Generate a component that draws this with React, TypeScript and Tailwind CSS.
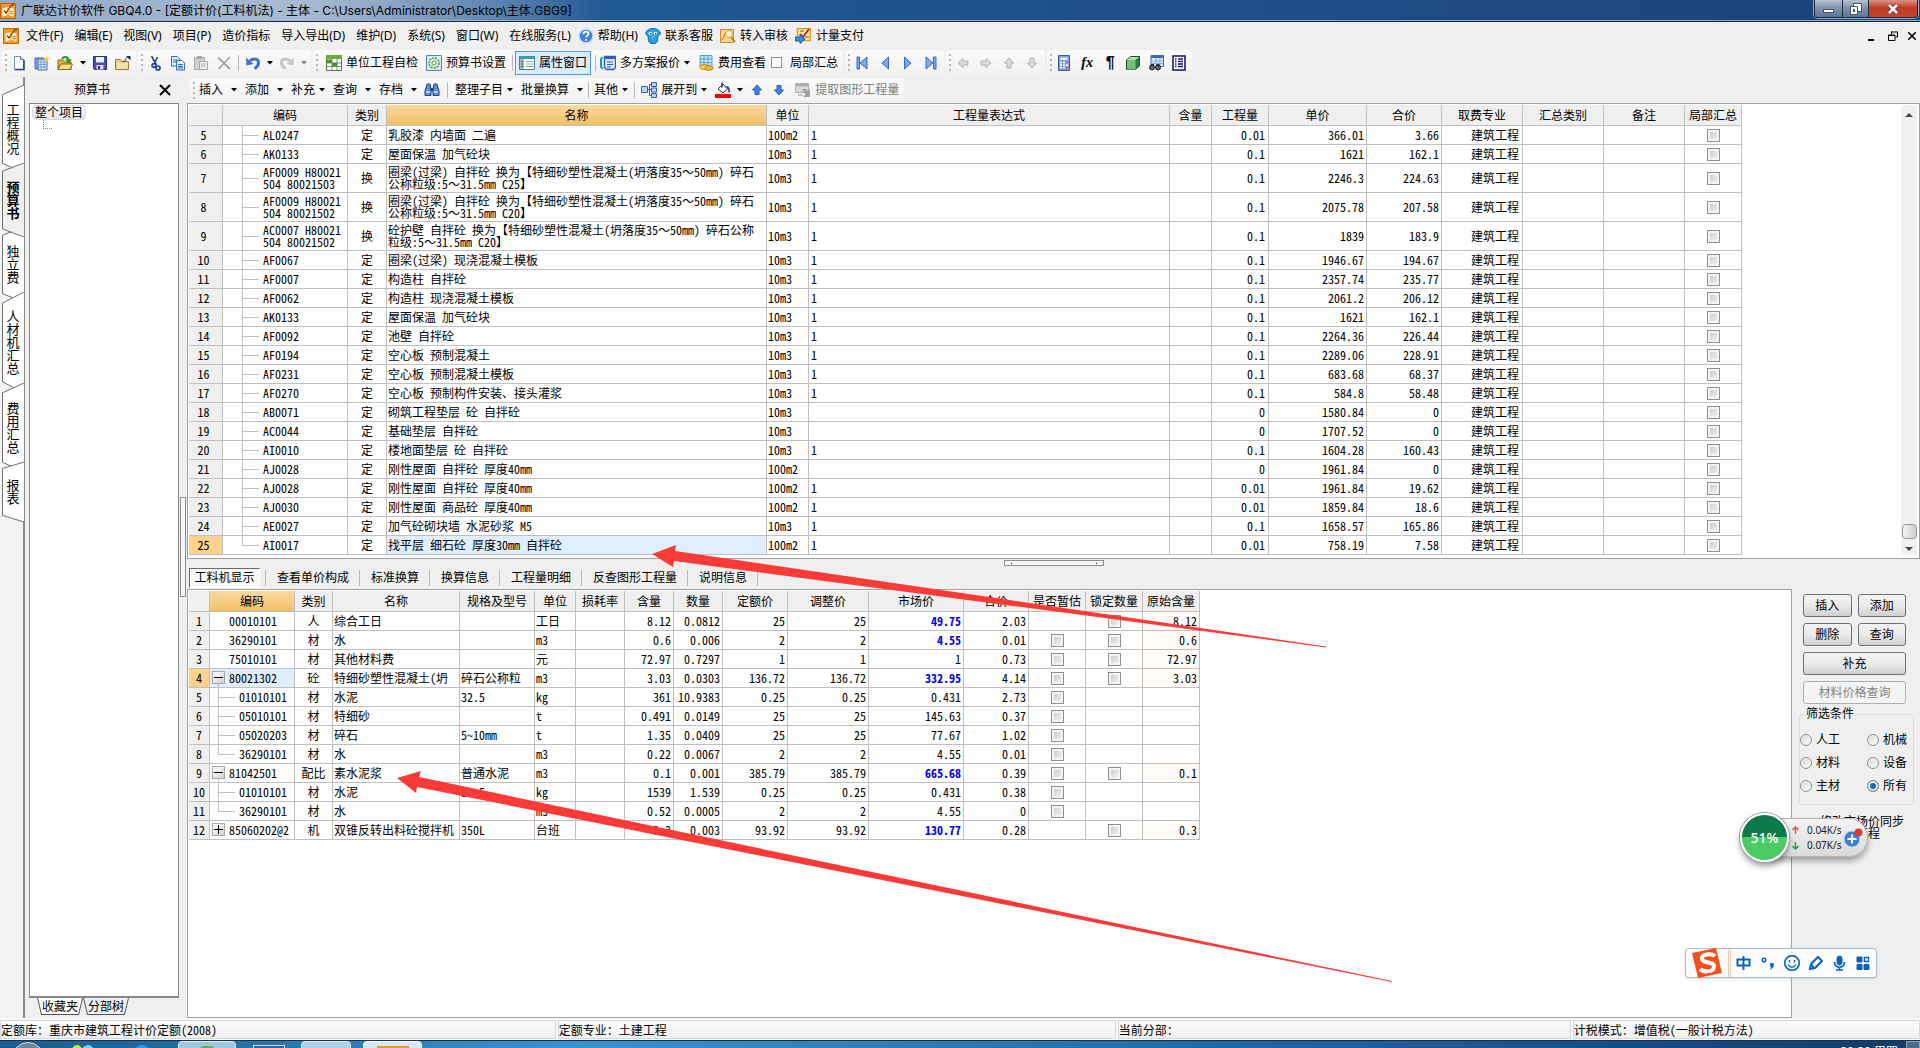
import { Fragment, ReactNode } from "react";

const uiFont = "font-['Noto_Sans','Noto_Sans_CJK_SC',sans-serif]";
const gridFont = "font-['Noto_Sans_Mono_CJK_SC','Liberation_Sans','Noto_Sans_CJK_SC',sans-serif]";

const quotaCols = [
  { label: "", w: "w-[34px]" },
  { label: "编码", w: "w-[125px]" },
  { label: "类别", w: "w-[39px]" },
  { label: "名称", w: "w-[380px]" },
  { label: "单位", w: "w-[42px]" },
  { label: "工程量表达式", w: "w-[361px]" },
  { label: "含量", w: "w-[42px]" },
  { label: "工程量", w: "w-[57px]" },
  { label: "单价", w: "w-[98px]" },
  { label: "合价", w: "w-[75px]" },
  { label: "取费专业", w: "w-[81px]" },
  { label: "汇总类别", w: "w-[81px]" },
  { label: "备注", w: "w-[81px]" },
  { label: "局部汇总", w: "w-[57px]" },
];

// no, code, type, name, unit, expression, quantity, price, total
const quotas = [
  ["5", "AL0247", "定", "乳胶漆 内墙面 二遍", "100m2", "1", "0.01", "366.01", "3.66"],
  ["6", "AK0133", "定", "屋面保温 加气砼块", "10m3", "1", "0.1", "1621", "162.1"],
  ["7", "AF0009 H80021\n504 80021503", "换", "圈梁(过梁) 自拌砼 换为【特细砂塑性混凝土(坍落度35～50mm) 碎石\n公称粒级:5～31.5mm C25】", "10m3", "1", "0.1", "2246.3", "224.63"],
  ["8", "AF0009 H80021\n504 80021502", "换", "圈梁(过梁) 自拌砼 换为【特细砂塑性混凝土(坍落度35～50mm) 碎石\n公称粒级:5～31.5mm C20】", "10m3", "1", "0.1", "2075.78", "207.58"],
  ["9", "AC0007 H80021\n504 80021502", "换", "砼护壁 自拌砼 换为【特细砂塑性混凝土(坍落度35～50mm) 碎石公称\n粒级:5～31.5mm C20】", "10m3", "1", "0.1", "1839", "183.9"],
  ["10", "AF0067", "定", "圈梁(过梁) 现浇混凝土模板", "10m3", "1", "0.1", "1946.67", "194.67"],
  ["11", "AF0007", "定", "构造柱 自拌砼", "10m3", "1", "0.1", "2357.74", "235.77"],
  ["12", "AF0062", "定", "构造柱 现浇混凝土模板", "10m3", "1", "0.1", "2061.2", "206.12"],
  ["13", "AK0133", "定", "屋面保温 加气砼块", "10m3", "1", "0.1", "1621", "162.1"],
  ["14", "AF0092", "定", "池壁 自拌砼", "10m3", "1", "0.1", "2264.36", "226.44"],
  ["15", "AF0194", "定", "空心板 预制混凝土", "10m3", "1", "0.1", "2289.06", "228.91"],
  ["16", "AF0231", "定", "空心板 预制混凝土模板", "10m3", "1", "0.1", "683.68", "68.37"],
  ["17", "AF0270", "定", "空心板 预制构件安装、接头灌浆", "10m3", "1", "0.1", "584.8", "58.48"],
  ["18", "AB0071", "定", "砌筑工程垫层 砼 自拌砼", "10m3", "", "0", "1580.84", "0"],
  ["19", "AC0044", "定", "基础垫层 自拌砼", "10m3", "", "0", "1707.52", "0"],
  ["20", "AI0010", "定", "楼地面垫层 砼 自拌砼", "10m3", "1", "0.1", "1604.28", "160.43"],
  ["21", "AJ0028", "定", "刚性屋面 自拌砼 厚度40mm", "100m2", "", "0", "1961.84", "0"],
  ["22", "AJ0028", "定", "刚性屋面 自拌砼 厚度40mm", "100m2", "1", "0.01", "1961.84", "19.62"],
  ["23", "AJ0030", "定", "刚性屋面 商品砼 厚度40mm", "100m2", "1", "0.01", "1859.84", "18.6"],
  ["24", "AE0027", "定", "加气砼砌块墙 水泥砂浆 M5", "10m3", "1", "0.1", "1658.57", "165.86"],
  ["25", "AI0017", "定", "找平层 细石砼 厚度30mm 自拌砼", "100m2", "1", "0.01", "758.19", "7.58"],
];

const resourceCols = [
  { label: "", w: "w-[21px]" },
  { label: "编码", w: "w-[85px]" },
  { label: "类别", w: "w-[38px]" },
  { label: "名称", w: "w-[127px]" },
  { label: "规格及型号", w: "w-[75px]" },
  { label: "单位", w: "w-[41px]" },
  { label: "损耗率", w: "w-[49px]" },
  { label: "含量", w: "w-[49px]" },
  { label: "数量", w: "w-[49px]" },
  { label: "定额价", w: "w-[65px]" },
  { label: "调整价", w: "w-[81px]" },
  { label: "市场价", w: "w-[95px]" },
  { label: "合价", w: "w-[65px]" },
  { label: "是否暂估", w: "w-[57px]" },
  { label: "锁定数量", w: "w-[57px]" },
  { label: "原始含量", w: "w-[57px]" },
];

type Node = "root" | "open" | "closed" | "child" | "last";

interface Resource {
  code: string;
  node: Node;
  kind: string;
  name: string;
  spec?: string;
  unit: string;
  nums: string[];
  changed?: boolean;
  estimate?: boolean;
  lock?: boolean;
  origin?: string;
}

const resources: Resource[] = [
  { code: "00010101", node: "root", kind: "人", name: "综合工日", unit: "工日", nums: ["8.12", "0.0812", "25", "25", "49.75", "2.03"], changed: true, lock: true, origin: "8.12" },
  { code: "36290101", node: "root", kind: "材", name: "水", unit: "m3", nums: ["0.6", "0.006", "2", "2", "4.55", "0.01"], changed: true, estimate: true, lock: true, origin: "0.6" },
  { code: "75010101", node: "root", kind: "材", name: "其他材料费", unit: "元", nums: ["72.97", "0.7297", "1", "1", "1", "0.73"], estimate: true, lock: true, origin: "72.97" },
  { code: "80021302", node: "open", kind: "砼", name: "特细砂塑性混凝土(坍", spec: "碎石公称粒", unit: "m3", nums: ["3.03", "0.0303", "136.72", "136.72", "332.95", "4.14"], changed: true, estimate: true, lock: true, origin: "3.03" },
  { code: "01010101", node: "child", kind: "材", name: "水泥", spec: "32.5", unit: "kg", nums: ["361", "10.9383", "0.25", "0.25", "0.431", "2.73"], estimate: true },
  { code: "05010101", node: "child", kind: "材", name: "特细砂", unit: "t", nums: ["0.491", "0.0149", "25", "25", "145.63", "0.37"], estimate: true },
  { code: "05020203", node: "child", kind: "材", name: "碎石", spec: "5~10mm", unit: "t", nums: ["1.35", "0.0409", "25", "25", "77.67", "1.02"], estimate: true },
  { code: "36290101", node: "last", kind: "材", name: "水", unit: "m3", nums: ["0.22", "0.0067", "2", "2", "4.55", "0.01"], estimate: true },
  { code: "81042501", node: "open", kind: "配比", name: "素水泥浆", spec: "普通水泥", unit: "m3", nums: ["0.1", "0.001", "385.79", "385.79", "665.68", "0.39"], changed: true, estimate: true, lock: true, origin: "0.1" },
  { code: "01010101", node: "child", kind: "材", name: "水泥", spec: "32.5", unit: "kg", nums: ["1539", "1.539", "0.25", "0.25", "0.431", "0.38"], estimate: true },
  { code: "36290101", node: "last", kind: "材", name: "水", unit: "m3", nums: ["0.52", "0.0005", "2", "2", "4.55", "0"], estimate: true },
  { code: "85060202@2", node: "closed", kind: "机", name: "双锥反转出料砼搅拌机", spec: "350L", unit: "台班", nums: ["0.3", "0.003", "93.92", "93.92", "130.77", "0.28"], changed: true, lock: true, origin: "0.3" },
];

const menus = ["文件(F)", "编辑(E)", "视图(V)", "项目(P)", "造价指标", "导入导出(D)", "维护(D)", "系统(S)", "窗口(W)", "在线服务(L)"];

const sideTabs = [
  { label: "工程概况", h: "h-[88px]" },
  { label: "预算书", h: "h-[74px]" },
  { label: "独立费", h: "h-[75px]" },
  { label: "人材机汇总", h: "h-[101px]" },
  { label: "费用汇总", h: "h-[89px]" },
  { label: "报表", h: "h-[60px]" },
];

const detailTabs = ["查看单价构成", "标准换算", "换算信息", "工程量明细", "反查图形工程量", "说明信息"];

function Icon({ children, className = "" }: { children: ReactNode; className?: string }) {
  return (
    <svg viewBox="0 0 16 16" className={`w-4 h-4 shrink-0 ${className}`} fill="none" aria-hidden="true">
      {children}
    </svg>
  );
}

const AppLogo = () => (
  <Icon>
    <rect x="0.5" y="0.5" width="15" height="15" fill="#f09a1c" stroke="#b9690c" />
    <path d="M2.500 5.500l5-1.500v8l-5 1.500z" fill="#fff6df" />
    <path d="M8.500 4l5 1.500v8l-5-1.500z" fill="#fdebc0" />
    <path d="M4 7.500l2 2.500L11.500 2l2.500-.5" stroke="#7a3d05" strokeWidth="1.300" />
    <path d="M9.500 8l3 .8M9.500 10.200l3 .8" stroke="#b86f1a" />
  </Icon>
);

const NewIcon = () => (
  <Icon>
    <path d="M3.500 1.500h6l3 3v10h-9z" fill="#fff" stroke="#7d8fb0" />
    <path d="M9.500 1.500v3h3" fill="#dfe8f7" stroke="#5b6f93" />
    <path d="M13 5v9.500H4" stroke="#1f3f78" strokeWidth="1.500" />
  </Icon>
);

const SheetIcon = () => (
  <Icon>
    <path d="M1 3h9v11H1z" fill="#7fa6dd" stroke="#4a6ea8" />
    <path d="M4 4h9v11H4z" fill="#dbe9fb" stroke="#4a6ea8" />
    <path d="M4 7h9M4 9.500h9M4 12h9M7 4v11M10 4v11" stroke="#7f9fcf" />
    <path d="M12.500 0l1 2.500L16 3.500l-2.500 1-1 2.500-1-2.500L9 3.500l2.500-1z" fill="#ffd34a" />
  </Icon>
);

const OpenIcon = () => (
  <Icon>
    <path d="M1 5h5l1.500 2H14v7.500H1z" fill="#e8b23a" stroke="#8a6210" />
    <path d="M1 14.500L4 9h11.500L13 14.500z" fill="#ffe08a" stroke="#8a6210" />
    <path d="M5 4c2-3 6-2.500 6.500 1" stroke="#2d9a24" strokeWidth="2" />
    <path d="M8 4.500h7L11.500 9z" fill="#2d9a24" />
  </Icon>
);

const SaveIcon = () => (
  <Icon>
    <path d="M1.500 1.500h13v13h-12l-1-1z" fill="#4a4fb4" stroke="#26297d" />
    <path d="M4 2h8v5.500H4z" fill="#f3f4fb" />
    <path d="M4.500 10h7v4.500h-7z" fill="#d9dbe6" />
    <path d="M6 11h2v3H6z" fill="#26297d" />
  </Icon>
);

const FolderIcon = () => (
  <Icon>
    <path d="M.5 4.500h5l1.500 2h6.500v8H.5z" fill="#f2cf85" stroke="#a07a30" />
    <path d="M2 8h10.500v6H2z" fill="#f8e1ac" />
    <path d="M11 3.500c0 2-1 3-3 3M11 3.500l2-2" stroke="#27304f" />
    <path d="M11 1h4.500v4.500z" fill="#27304f" />
  </Icon>
);

const CutIcon = () => (
  <Icon>
    <path d="M4.500 1l5 9M10.500 2l-3 6" stroke="#39465f" strokeWidth="1.600" />
    <circle cx="11" cy="13" r="2" stroke="#1d3fae" strokeWidth="1.700" />
    <circle cx="7" cy="10.500" r="1.900" stroke="#1d3fae" strokeWidth="1.700" />
  </Icon>
);

const CopyIcon = () => (
  <Icon>
    <path d="M1.500 1.500h6l2.500 2.500v7h-8.500z" fill="#e6f0ff" stroke="#2f66bd" />
    <path d="M3 5h5M3 7h3" stroke="#2f66bd" />
    <path d="M6.500 5.500h5.500l2.500 2.500v7h-8z" fill="#e6f0ff" stroke="#2f66bd" />
    <path d="M8 9.500h5M8 11.500h5M8 13h5" stroke="#2f66bd" />
  </Icon>
);

const PasteIcon = () => (
  <Icon>
    <path d="M1.500 2.500h10v12h-10z" fill="#cfcfcf" stroke="#a9a9a9" />
    <path d="M4 1h5v3H4z" fill="#a9a9a9" />
    <path d="M6.500 6.500h8v8h-8z" fill="#ececec" stroke="#a9a9a9" />
    <path d="M8 9h5M8 11h5" stroke="#b9b9b9" />
  </Icon>
);

const DeleteIcon = () => (
  <Icon>
    <path d="M2 2.500l12 11.500M14 2L2.500 14" stroke="#a3a3a3" strokeWidth="1.800" />
  </Icon>
);

const UndoIcon = ({ color }: { color: string }) => (
  <Icon>
    <path d="M5 6c3-3 8.500-2.500 8.500 1.500 0 3-2 5-4 6" stroke={color} strokeWidth="3" />
    <path d="M1 2.500l.5 8 7-1.500z" fill={color} />
  </Icon>
);

const CheckTableIcon = () => (
  <Icon>
    <path d="M.5.500h15v15H.5z" fill="#fff" stroke="#4f7f2e" />
    <path d="M0 0h16v4H0z" fill="#6cab35" />
    <path d="M1 8h14M1 11.500h14M6 4v11M11 4v11" stroke="#7d8b94" />
    <path d="M1 4.500h5V8H1zM6 8h5v3.500H6z" fill="#4b8f2c" />
  </Icon>
);

const BookSetIcon = () => (
  <Icon>
    <path d="M.5.500h15v15H.5z" fill="#dbe9f4" stroke="#5b83b1" />
    <circle cx="8" cy="8" r="5" fill="#d7f0cf" stroke="#4e9a4a" strokeWidth="1.500" strokeDasharray="2 1" />
    <circle cx="8" cy="8" r="2" fill="#fff" stroke="#4e9a4a" />
  </Icon>
);

const PropsIcon = () => (
  <Icon>
    <path d="M.5 1.500h15v13H.5z" fill="#fff" stroke="#4e7f8f" />
    <path d="M0 1h16v3H0z" fill="#2f9cb8" />
    <path d="M1 4h4v10H1z" fill="#9fbfae" />
    <path d="M2 6.500h2M2 9h2M2 11.500h2" stroke="#2f6f4f" />
    <path d="M7 6.500h7M7 9h7M7 11.500h7" stroke="#7fae8f" />
  </Icon>
);

const PlanIcon = () => (
  <Icon>
    <path d="M2.500 2L1 4v8l2 1.500" stroke="#18a0a8" strokeWidth="2" />
    <path d="M4.500 1.500h11v11l-2 2h-7l-2-2z" fill="#dbe8ff" stroke="#2b5fd0" strokeWidth="1.400" />
    <path d="M5 3h10" stroke="#2b5fd0" strokeWidth="2" />
    <path d="M7 7h6M7 9.500h6M7 12h4" stroke="#2b5fd0" />
  </Icon>
);

const CostIcon = () => (
  <Icon>
    <path d="M2 .5h12v11H2z" fill="#bfe2f5" stroke="#5da2c9" />
    <path d="M2 4h12M2 7.500h12M6 .5v11M10 .5v11" stroke="#5da2c9" />
    <ellipse cx="6" cy="12" rx="4" ry="2.500" fill="#ffd24d" stroke="#b58410" />
    <ellipse cx="11" cy="13" rx="4" ry="2.300" fill="#f3b63a" stroke="#b58410" />
  </Icon>
);

const NavIcon = ({ d }: { d: string }) => (
  <Icon>
    <path d={d} fill="#7fa8ee" stroke="#3567c9" />
  </Icon>
);

const GrayArrow = ({ turn }: { turn: string }) => (
  <Icon className={turn}>
    <path d="M3 8l5-4.500v2.500h5v4H8v2.500z" fill="#dcdcdc" stroke="#b0b0b0" />
  </Icon>
);

const BlueArrow = ({ turn }: { turn: string }) => (
  <Icon className={turn}>
    <path d="M3 8l5-4.500v2.500h4.500v4H8v2.500z" fill="#3c86ea" stroke="#2058b8" />
  </Icon>
);

const CalcIcon = () => (
  <Icon>
    <path d="M2.500.500h11v15h-11z" fill="#7d9edb" stroke="#375896" />
    <path d="M4.500 2.500h7v2.500h-7z" fill="#eef6ff" />
    <path d="M4 7.500h8M4 10h8M4 12.500h8" stroke="#fff" strokeWidth="1.500" strokeDasharray="2 1" />
    <path d="M10 7.500h2M10 12.500h2" stroke="#e04848" strokeWidth="1.500" />
  </Icon>
);

const CubeIcon = () => (
  <Icon>
    <path d="M1.500 5l4-3.500h9v9.500l-4 3.500h-9z" fill="#2f7d3c" stroke="#1b5426" />
    <path d="M2 5h8.500v9.500H2z" fill="#73c07d" />
    <path d="M2 5l3.500-3h8.500l-3.500 3z" fill="#b5e0b5" />
  </Icon>
);

const FindSheetIcon = () => (
  <Icon>
    <path d="M3 .5h12.500v11H3z" fill="#dce9fb" stroke="#3e6cb5" />
    <path d="M3 1h12v2H3z" fill="#3e6cb5" />
    <path d="M4 6h11M4 8.500h11M8 3v8M12 3v8" stroke="#8aa9da" />
    <circle cx="4" cy="12.500" r="2.500" fill="#5d6670" stroke="#23282e" />
    <circle cx="10" cy="12.500" r="2.500" fill="#5d6670" stroke="#23282e" />
    <path d="M3 9h3v2H3zM8.500 9h3v2h-3z" fill="#23282e" />
  </Icon>
);

const ListIcon = () => (
  <Icon>
    <path d="M2 1h12v14H2z" fill="#fff" stroke="#101060" strokeWidth="1.500" />
    <path d="M4 4h1.500M4 6.500h1.500M4 9h1.500M4 11.500h1.500M7 4h5M7 6.500h5M7 9h5M7 11.500h5" stroke="#101080" strokeWidth="1.300" />
  </Icon>
);

const BinocularsIcon = () => (
  <Icon>
    <path d="M3 2h3l1 5v6.500H1V9zM10 2h3l2 7v4.500H9V7z" fill="#5f8fd8" stroke="#1f4288" />
    <path d="M6.500 6h3v3h-3z" fill="#1f4288" />
    <path d="M2 10h4M10 10h4" stroke="#dcebff" strokeWidth="1.500" />
  </Icon>
);

const ExpandIcon = () => (
  <Icon>
    <path d="M.5 4.500h6v6h-6zM10.500.500h5v4h-5zM10.500 6h5v4h-5zM10.500 11.500h5v4h-5z" fill="#b9d4f6" stroke="#2f5fae" />
    <path d="M6.500 7.500h4M8.500 2.500h2M8.500 13.500h2M8.500 2.500v11" stroke="#2f5fae" />
  </Icon>
);

const BucketIcon = () => (
  <Icon>
    <path d="M3 7l5-5 4.500 5L8 11z" fill="#fff" stroke="#20242c" />
    <path d="M7 .5v5M11.500 4.500c3 1 3 3 2.500 6" stroke="#1d3f9e" strokeWidth="1.600" />
    <path d="M0 12h16v4H0z" fill="#ff0000" />
  </Icon>
);

const ExtractIcon = () => (
  <Icon>
    <path d="M.5 1.500h13v9H.5z" fill="#d9d9d9" stroke="#b0b0b0" />
    <path d="M1 2h12v2.500H1z" fill="#b0b0b0" />
    <path d="M7 7h4l2 2 2-2v8H8l2.500-2.500z" fill="#a0a0a0" />
    <path d="M3 12h5v2H3z" fill="#c6c6c6" />
  </Icon>
);

const HelpIcon = () => (
  <Icon>
    <circle cx="8" cy="8" r="7" fill="#3f7fdc" stroke="#cfdcf2" strokeWidth="1.500" />
    <path d="M5.500 6.200c0-3.400 5-3.200 5-.4 0 1.800-2.400 1.800-2.400 3.600M8 11v1.800" stroke="#fff" strokeWidth="1.800" />
  </Icon>
);

const ServiceIcon = () => (
  <Icon>
    <path d="M8 .5c5 0 7 2.500 7.500 5.500L13 8l-.5 5-2 2.500h-5L3.500 13 3 8 .5 6C1 3 3 .5 8 .5z" fill="#23a0e6" stroke="#0f6fb0" />
    <circle cx="5.500" cy="5.500" r="1.800" fill="#fff" />
    <circle cx="10.500" cy="5.500" r="1.800" fill="#fff" />
    <path d="M5 5h1.500v1.500H5zM10 5h1.500v1.500H10z" fill="#222" />
    <path d="M6.500 8.500h3L8 10z" fill="#f2b02c" />
  </Icon>
);

const AuditIcon = () => (
  <Icon>
    <path d="M.5 1.500h13v13H.5z" fill="#fbd58a" stroke="#c98a28" />
    <path d="M2 12l4-8 3 3" stroke="#c9641c" />
    <circle cx="9" cy="6" r="3.500" fill="#fff1cf" stroke="#d3a04c" />
    <path d="M11 9l4 5" stroke="#b8731b" strokeWidth="2" />
  </Icon>
);

const PayIcon = () => (
  <Icon>
    <path d="M2.500.500h13v12h-13z" fill="#ffe6b0" stroke="#d99a2b" strokeWidth="1.500" />
    <path d="M5 6l3 3 6-8" stroke="#c3261c" strokeWidth="2" />
    <path d="M5 3h4M10 9h4" stroke="#7a4a12" />
    <path d="M0 9h5V6.500l5 4.500-5 4.500V13H0z" fill="#2f8fe0" stroke="#1c62a8" />
  </Icon>
);

function Caret({ dim, className = "" }: { dim?: boolean; className?: string }) {
  return (
    <svg viewBox="0 0 6 4" className={`w-[6px] h-1 shrink-0 ${className}`} aria-hidden="true">
      <path d="M0 0h6L3 3.500z" fill={dim ? "#808080" : "#000"} />
    </svg>
  );
}

function Grip() {
  return (
    <span className="mr-[3px] flex w-[3px] shrink-0 flex-col gap-[3px]">
      {[0, 1, 2, 3].map((i) => (
        <i key={i} className="h-[2px] w-[2px] bg-[#b4b4b4]" />
      ))}
    </span>
  );
}

const Sep = ({ className = "" }: { className?: string }) => (
  <i className={`h-4 w-px shrink-0 bg-[#b9b9b9] ${className}`} />
);

function Group({ children, gap = "gap-[7px]" }: { children: ReactNode; gap?: string }) {
  return (
    <div className="flex h-[25px] shrink-0 items-center rounded-sm bg-linear-to-b from-[#fbfbfb] to-[#f1f1f1] pl-[3px] pr-[5px]">
      <Grip />
      <div className={`flex items-center ${gap}`}>{children}</div>
    </div>
  );
}

function IconButton({ label, children, className = "" }: { label: string; children: ReactNode; className?: string }) {
  return (
    <button type="button" aria-label={label} className={`flex h-6 items-center ${className}`}>
      {children}
    </button>
  );
}

function TextButton({ icon, label, active, caret }: { icon: ReactNode; label: string; active?: boolean; caret?: boolean }) {
  return (
    <button
      type="button"
      className={`flex h-6 items-center gap-1 whitespace-nowrap border px-[3px] ${
        active ? "border-[#4a98e8] bg-[#d9ebfc]" : "border-transparent"
      }`}
    >
      {icon}
      {label}
      {caret && <Caret />}
    </button>
  );
}

function DropButton({ label, wide, icon }: { label: string; wide?: boolean; icon?: ReactNode }) {
  return (
    <button type="button" className={`flex items-center whitespace-nowrap ${wide ? "gap-2" : "gap-1"}`}>
      {icon}
      {label}
      <Caret />
    </button>
  );
}

function Tick({ label }: { label: string }) {
  return (
    <input
      type="checkbox"
      aria-label={label}
      className="block mx-auto h-[13px] w-[13px] appearance-none border border-[#8e8f8f] bg-linear-to-br from-[#c3c6cf] to-[#f6f6f6] shadow-[inset_0_0_0_2px_#f4f4f4]"
    />
  );
}

function TitleBar() {
  return (
    <header className="flex h-[22px] shrink-0 items-center justify-between border-b border-[#16294a] bg-linear-to-r from-[#8ea6c4] via-[#1f5894] via-32% to-[#1b4478] shadow-[inset_0_-1px_0_#8fa9c9]">
      <div className="flex h-full items-center gap-[5px] bg-linear-to-r from-[#93aac8] via-[#a9bbd2] to-transparent pr-6">
        <AppLogo />
        <h1 className="whitespace-nowrap font-['Inter','Noto_Sans_CJK_SC',sans-serif] text-[12px] leading-5">
          广联达计价软件 GBQ4.0 - [定额计价(工料机法) - 主体 - C:\Users\Administrator\Desktop\主体.GBG9]
        </h1>
      </div>
      <div className="mr-[2px] flex h-[18px] self-start overflow-hidden rounded-b border border-t-0 border-[#1c2c44] shadow-[0_0_0_1px_#8fa5c0]">
        <button type="button" aria-label="最小化" className="flex w-7 items-end justify-center border-r border-[#1c2c44] bg-linear-to-b from-[#b7c3d2] via-[#8194ad] via-45% to-[#5f7593] pb-1">
          <i className="h-1 w-[11px] border border-[#44546a] bg-white" />
        </button>
        <button type="button" aria-label="还原" className="flex w-[26px] items-center justify-center border-r border-[#1c2c44] bg-linear-to-b from-[#b7c3d2] via-[#8194ad] via-45% to-[#5f7593]">
          <svg viewBox="0 0 12 12" className="h-3 w-3">
            <path d="M3.500.500h8v8h-8z" fill="#fff" stroke="#44546a" />
            <path d="M.5 3.500h7v8h-7z" fill="#fff" stroke="#44546a" />
            <path d="M3 6h2v3H3z" fill="#44546a" />
          </svg>
        </button>
        <button type="button" aria-label="关闭" className="flex w-12 items-center justify-center bg-linear-to-b from-[#dd9384] via-[#bf3a24] via-45% to-[#c4452c]">
          <svg viewBox="0 0 12 12" className="h-3 w-3">
            <path d="M2 2l8 8M10 2l-8 8" stroke="#54343a" strokeWidth="4" />
            <path d="M2 2l8 8M10 2l-8 8" stroke="#fff" strokeWidth="2.500" />
          </svg>
        </button>
      </div>
    </header>
  );
}

function MenuBar() {
  return (
    <nav className="flex h-7 shrink-0 items-center gap-[11px] whitespace-nowrap pl-[3px] pr-1">
      <span className="-mr-1"><AppLogo /></span>
      {menus.map((m) => (
        <button type="button" key={m}>{m}</button>
      ))}
      <button type="button" className="-ml-1 -mr-1 flex items-center gap-1"><HelpIcon />帮助(H)</button>
      <button type="button" className="-mr-1 flex items-center gap-1"><ServiceIcon />联系客服</button>
      <button type="button" className="-mr-1 flex items-center gap-1"><AuditIcon />转入审核</button>
      <button type="button" className="flex items-center gap-[5px]"><PayIcon />计量支付</button>
      <div className="ml-auto flex items-center gap-2">
        <button type="button" aria-label="最小化窗口" className="flex h-3 w-3 items-end"><i className="mb-px h-[2px] w-[6px] bg-black" /></button>
        <button type="button" aria-label="还原窗口">
          <svg viewBox="0 0 10 10" className="h-[10px] w-[10px]" fill="none" stroke="#000">
            <path d="M3 1h6M9.500.500v5.500h-2M3.500.500v3M.5 4h6.500v5.500H.5zM0 4.500h7" />
          </svg>
        </button>
        <button type="button" aria-label="关闭窗口" className="ml-[2px]">
          <svg viewBox="0 0 8 8" className="h-2 w-2" stroke="#000" strokeWidth="1.500">
            <path d="M0 0l8 8M8 0L0 8" />
          </svg>
        </button>
      </div>
    </nav>
  );
}

function MainToolbar() {
  return (
    <div className="flex h-[27px] shrink-0 items-center gap-[2px] pb-[2px] pl-[2px]">
      <Group>
        <IconButton label="新建"><NewIcon /></IconButton>
        <IconButton label="新建预算书"><SheetIcon /></IconButton>
        <IconButton label="打开"><OpenIcon /></IconButton>
        <Caret className="-mr-px" />
        <IconButton label="保存"><SaveIcon /></IconButton>
        <IconButton label="关闭文件"><FolderIcon /></IconButton>
      </Group>
      <Group>
        <IconButton label="剪切"><CutIcon /></IconButton>
        <IconButton label="复制"><CopyIcon /></IconButton>
        <IconButton label="粘贴"><PasteIcon /></IconButton>
        <IconButton label="删除"><DeleteIcon /></IconButton>
        <Sep className="-mx-px" />
        <IconButton label="撤销" className="-mr-px"><UndoIcon color="#3d6fd6" /></IconButton>
        <Caret className="-mr-px" />
        <IconButton label="恢复" className="-mr-px"><span className="-scale-x-100"><UndoIcon color="#c4c4c4" /></span></IconButton>
        <Caret dim className="-mr-px" />
      </Group>
      <Group gap="gap-0">
        <TextButton icon={<CheckTableIcon />} label="单位工程自检" />
        <TextButton icon={<BookSetIcon />} label="预算书设置" />
        <Sep className="mx-[2px]" />
        <TextButton icon={<PropsIcon />} label="属性窗口" active />
        <Sep className="ml-1" />
        <TextButton icon={<PlanIcon />} label="多方案报价" caret />
        <TextButton icon={<CostIcon />} label="费用查看" />
        <label className="ml-px flex items-center gap-2 whitespace-nowrap">
          <input type="checkbox" className="h-[11px] w-[11px] appearance-none border border-[#8e8f8f] bg-white" />
          局部汇总
        </label>
      </Group>
      <Group>
        <IconButton label="首行"><NavIcon d="M3 2h2.500v12H3zM13 2v12L6 8z" /></IconButton>
        <IconButton label="上一行"><NavIcon d="M11.500 2v12L5 8z" /></IconButton>
        <IconButton label="下一行"><NavIcon d="M4.500 2v12L11 8z" /></IconButton>
        <IconButton label="末行"><NavIcon d="M10.500 2H13v12h-2.500zM3 2v12l7-6z" /></IconButton>
      </Group>
      <Group>
        <IconButton label="左移"><GrayArrow turn="" /></IconButton>
        <IconButton label="右移"><GrayArrow turn="rotate-180" /></IconButton>
        <IconButton label="上移"><GrayArrow turn="rotate-90" /></IconButton>
        <IconButton label="下移"><GrayArrow turn="-rotate-90" /></IconButton>
      </Group>
      <Group>
        <IconButton label="计算器"><CalcIcon /></IconButton>
        <button type="button" className="w-4 text-center font-['Liberation_Serif',serif] text-[14px] font-bold italic">fx</button>
        <button type="button" className="w-4 text-center font-['Liberation_Sans',sans-serif] text-[16px] font-bold">¶</button>
        <IconButton label="图集"><CubeIcon /></IconButton>
        <IconButton label="查找表"><FindSheetIcon /></IconButton>
        <IconButton label="列表"><ListIcon /></IconButton>
      </Group>
    </div>
  );
}

function EditToolbar() {
  return (
    <div className="flex h-[26px] shrink-0 items-center pl-[3px]">
      <Group gap="gap-[8px]">
        <DropButton label="插入" wide />
        <DropButton label="添加" wide />
        <DropButton label="补充" />
        <DropButton label="查询" wide />
        <DropButton label="存档" wide />
        <IconButton label="查找" className="-ml-px"><BinocularsIcon /></IconButton>
        <Sep className="-mx-px" />
        <DropButton label="整理子目" />
        <DropButton label="批量换算" wide />
        <Sep className="-mx-[3px]" />
        <DropButton label="其他" />
        <Sep className="-mx-[2px]" />
        <DropButton label="展开到" icon={<ExpandIcon />} />
        <IconButton label="填充颜色"><BucketIcon /></IconButton>
        <Caret className="-mx-[2px]" />
        <IconButton label="上移一行" className="-mr-[2px]"><BlueArrow turn="rotate-90" /></IconButton>
        <IconButton label="下移一行"><BlueArrow turn="-rotate-90" /></IconButton>
        <button type="button" className="flex items-center gap-1 whitespace-nowrap text-[#7d7d7d]">
          <ExtractIcon />提取图形工程量
        </button>
      </Group>
    </div>
  );
}

function SideTabs() {
  return (
    <div className="w-[25px] shrink-0 border-r-2 border-[#8b8b8b] bg-[#f3f3f3] pt-2">
      {sideTabs.map((t) => {
        const active = t.label === "预算书";
        return (
          <button
            type="button"
            key={t.label}
            className={`relative -mb-[10px] ml-[2px] flex w-[22px] flex-col items-center justify-center text-[13px] leading-[13px] ${t.h} ${
              active ? "z-10 font-bold" : ""
            }`}
          >
            <svg viewBox="0 0 22 100" preserveAspectRatio="none" className="absolute inset-0 h-full w-full" aria-hidden="true">
              <path
                d="M22 0L.5 11v78L22 100"
                fill={active ? "#efefef" : "#fff"}
                stroke="#6f6f6f"
                vectorEffect="non-scaling-stroke"
              />
            </svg>
            {t.label.split("").map((c, i) => (
              <span key={i} className="relative">{c}</span>
            ))}
          </button>
        );
      })}
    </div>
  );
}

function TreePanel() {
  return (
    <section className="flex w-[154px] shrink-0 flex-col pl-1">
      <div className="flex h-[26px] shrink-0 items-center justify-between pr-2">
        <h2 className="pl-[45px]">预算书</h2>
        <button type="button" aria-label="关闭预算书">
          <svg viewBox="0 0 12 12" className="h-3 w-3" stroke="#000" strokeWidth="2">
            <path d="M1 1l10 10M11 1L1 11" />
          </svg>
        </button>
      </div>
      <div className="flex-1 border border-b-2 border-[#828790] bg-white p-[2px] pt-px">
        <button type="button" className="block rounded-sm border border-[#d9d9d9] bg-linear-to-b from-[#fafafa] to-[#e5e5e5] px-[2px] leading-[13px]">
          整个项目
        </button>
        <i className="ml-[11px] block h-[9px] w-[9px] border-b border-l border-dotted border-[#808080]" />
      </div>
      <div className="flex h-5 shrink-0 items-start pl-2">
        {["收藏夹", "分部树"].map((t) => (
          <button type="button" key={t} className="relative h-[17px] px-[5px] leading-4">
            <svg viewBox="0 0 46 17" preserveAspectRatio="none" className="absolute inset-0 h-full w-full" aria-hidden="true">
              <path d="M.5 0l4 16.500h37L45.500 0" fill={t === "收藏夹" ? "#fff" : "#efefef"} stroke="#555" />
            </svg>
            <span className="relative">{t}</span>
          </button>
        ))}
      </div>
    </section>
  );
}

const cell = "border-b border-r border-[#c0c0c0] p-0 overflow-hidden";

function GridHead({ cols, active }: { cols: { label: string; w: string }[]; active: string }) {
  return (
    <>
      <colgroup>
        {cols.map((c, i) => (
          <col key={i} className={c.w} />
        ))}
      </colgroup>
      <thead>
        <tr className="h-[21px]">
          {cols.map((c, i) => (
            <th
              key={i}
              className={`${cell} whitespace-nowrap font-normal ${
                c.label === active ? "bg-linear-to-b from-[#fbd9a0] to-[#f1c063]" : "bg-[#efefef]"
              }`}
            >
              {c.label}
            </th>
          ))}
        </tr>
      </thead>
    </>
  );
}

function QuotaGrid() {
  return (
    <div className="flex shrink-0 justify-between border border-[#a0a0a0] bg-white pb-[3px] pl-px pt-px">
      <table className={`w-[1553px] table-fixed border-separate border-spacing-0 text-[12px] leading-3 ${gridFont}`}>
        <GridHead cols={quotaCols} active="名称" />
        <tbody>
          {quotas.map(([no, code, type, name, unit, expr, qty, price, total]) => {
            const current = no === "25";
            return (
              <tr key={no} className={code.includes("\n") ? "h-[29px]" : "h-[19px]"}>
                <td className={`${cell} pr-1 text-center ${current ? "bg-[#ffd28c]" : "bg-[#efefef]"}`}>{no}</td>
                <td className={`${cell} h-[inherit]`}>
                  <div className="flex h-full items-stretch pl-[19px]">
                    <span className="flex w-[21px] shrink-0 flex-col">
                      <i className="w-[17px] flex-1 border-b border-l border-[#c0c0c0]" />
                      <i className={`w-[17px] flex-1 ${current ? "" : "border-l border-[#c0c0c0]"}`} />
                    </span>
                    <span className="self-center whitespace-pre">{code}</span>
                  </div>
                </td>
                <td className={`${cell} text-center`}>{type}</td>
                <td className={`${cell} whitespace-pre pl-px ${current ? "bg-[#dfefff]" : ""}`}>{name}</td>
                <td className={`${cell} pl-px`}>{unit}</td>
                <td className={`${cell} pl-[2px]`}>{expr}</td>
                <td className={cell}></td>
                <td className={`${cell} pr-[3px] text-right`}>{qty}</td>
                <td className={`${cell} pr-[2px] text-right`}>{price}</td>
                <td className={`${cell} pr-[2px] text-right`}>{total}</td>
                <td className={`${cell} pr-[3px] text-right`}>建筑工程</td>
                <td className={cell}></td>
                <td className={cell}></td>
                <td className={cell}><Tick label={`局部汇总 ${no}`} /></td>
              </tr>
            );
          })}
        </tbody>
      </table>
      <div className="mr-[2px] flex w-4 flex-col items-center justify-between bg-[#f0f0f0] pb-1 pt-2">
        <svg viewBox="0 0 8 4" className="h-1 w-2"><path d="M0 4h8L4 0z" fill="#444" /></svg>
        <div className="mt-auto flex flex-col items-center gap-2">
          <button type="button" aria-label="滚动条" className="h-[15px] w-[15px] rounded-sm border border-[#979797] bg-linear-to-r from-[#f5f5f5] to-[#cfcfd4]" />
          <svg viewBox="0 0 8 4" className="h-1 w-2"><path d="M0 0h8L4 4z" fill="#444" /></svg>
        </div>
      </div>
    </div>
  );
}

function NodeMark({ node }: { node: Node }) {
  if (node === "root") return <span className="w-[19px] shrink-0" />;
  if (node === "open" || node === "closed") {
    return (
      <span className="flex w-[19px] shrink-0 flex-col pl-[2px]">
        <span className="mt-[2px] flex h-[13px] w-[13px] items-center justify-center border border-[#a5a5a5] bg-linear-to-br from-white to-[#cfd3da]">
          <svg viewBox="0 0 9 9" className="h-[9px] w-[9px]" stroke="#000">
            <path d={node === "open" ? "M0 4.500h9" : "M0 4.500h9M4.500 0v9"} />
          </svg>
        </span>
        {node === "open" && <i className="ml-[6px] w-px flex-1 bg-[#c0c0c0]" />}
      </span>
    );
  }
  return (
    <span className="flex w-[29px] shrink-0 flex-col pl-2">
      <i className="w-[17px] flex-1 border-b border-l border-[#c0c0c0]" />
      <i className={`w-[17px] flex-1 ${node === "last" ? "" : "border-l border-[#c0c0c0]"}`} />
    </span>
  );
}

function ResourceGrid() {
  return (
    <div className="min-w-0 flex-1 border border-[#a0a0a0] bg-white pl-px pt-px">
      <table className={`w-[1011px] table-fixed border-separate border-spacing-0 text-[12px] leading-3 ${gridFont}`}>
        <GridHead cols={resourceCols} active="编码" />
        <tbody>
          {resources.map((r, i) => (
            <tr key={i} className="h-[19px] whitespace-nowrap">
              <td className={`${cell} text-center ${i === 3 ? "bg-[#ffd28c]" : "bg-[#efefef]"}`}>{i + 1}</td>
              <td className={`${cell} h-[inherit] ${i === 3 ? "bg-[#dfefff]" : ""}`}>
                <div className="flex h-full items-stretch">
                  <NodeMark node={r.node} />
                  <span className="self-center">{r.code}</span>
                </div>
              </td>
              <td className={`${cell} text-center`}>{r.kind}</td>
              <td className={`${cell} pl-px`}>{r.name}</td>
              <td className={`${cell} pl-px`}>{r.spec}</td>
              <td className={`${cell} pl-px`}>{r.unit}</td>
              <td className={cell}></td>
              {r.nums.map((n, k) => (
                <td key={k} className={`${cell} pr-[2px] text-right ${k === 4 && r.changed ? "font-bold text-[#0000f0]" : ""}`}>
                  {n}
                </td>
              ))}
              <td className={cell}>{r.estimate && <Tick label={`是否暂估 ${i + 1}`} />}</td>
              <td className={cell}>{r.lock && <Tick label={`锁定数量 ${i + 1}`} />}</td>
              <td className={`${cell} pr-[2px] text-right ${r.origin ? "bg-[#fffaf5]" : ""}`}>{r.origin}</td>
            </tr>
          ))}
        </tbody>
      </table>
    </div>
  );
}

function PushButton({ label, disabled, wide }: { label: string; disabled?: boolean; wide?: boolean }) {
  return (
    <button
      type="button"
      disabled={disabled}
      className={`h-[23px] rounded-[3px] border ${wide ? "col-span-2" : ""} ${
        disabled
          ? "border-[#adb2b5] bg-[#f4f4f4] text-[#838383]"
          : "border-[#707070] bg-linear-to-b from-[#f3f3f3] via-[#ebebeb] via-50% to-[#d0d0d0]"
      }`}
    >
      {label}
    </button>
  );
}

function FilterPanel() {
  return (
    <aside className="flex w-[128px] shrink-0 flex-col pl-[7px] pr-[6px] pt-[5px]">
      <div className="grid grid-cols-2 gap-x-[6px] gap-y-[6px] px-1 pr-2">
        <PushButton label="插入" />
        <PushButton label="添加" />
        <PushButton label="删除" />
        <PushButton label="查询" />
        <PushButton label="补充" wide />
        <PushButton label="材料价格查询" disabled wide />
      </div>
      <fieldset className="mt-[2px] rounded-[3px] border border-[#d5dfe5] pb-[10px]">
        <legend className="ml-1 px-[2px] leading-4">筛选条件</legend>
        <div className="grid grid-cols-[67px_1fr] gap-y-[7px] pt-[10px]">
          {["人工", "机械", "材料", "设备", "主材", "所有"].map((t) => (
            <label key={t} className="flex items-center gap-1 leading-4">
              <input
                type="radio"
                name="filter"
                defaultChecked={t === "所有"}
                className="h-3 w-3 appearance-none rounded-full border border-[#8e8f8f] bg-linear-to-br from-[#d5d5d5] to-white shadow-[inset_0_0_0_1px_#f4f4f4] checked:bg-none checked:bg-[#1a6f9f] checked:shadow-[inset_0_0_0_2px_#e8f2f8]"
              />
              {t}
            </label>
          ))}
        </div>
      </fieldset>
      <p className="mt-[11px] pl-[21px] leading-3">修改市场价同步<br />到其他工程</p>
    </aside>
  );
}

function DetailTabs() {
  return (
    <div className="flex h-[30px] shrink-0 flex-col">
      <div className="flex justify-center pt-px">
        <button type="button" aria-label="折叠下方窗口" className="flex h-[6px] w-[100px] items-center justify-between border border-[#8e8e8e] bg-[#f7f7f7] px-[6px]">
          <i className="h-px w-px bg-[#000080]" />
          <i className="h-px w-px bg-[#000080]" />
        </button>
      </div>
      <div className="mt-[2px] flex h-5 items-center pl-[2px]">
        <button type="button" className="mr-[5px] h-5 w-[71px] border border-b-white border-l-[#696969] border-r-white border-t-[#696969] bg-[#f8f8f8] leading-[18px]">
          工料机显示
        </button>
        <Sep />
        {detailTabs.map((t) => (
          <Fragment key={t}>
            <button type="button" className="whitespace-nowrap pl-[11px] pr-[10px] leading-5">{t}</button>
            <Sep />
          </Fragment>
        ))}
      </div>
    </div>
  );
}

function StatusBar() {
  const panes = ["定额库：重庆市建筑工程计价定额(2008)", "定额专业：土建工程", "当前分部：", "计税模式：增值税(一般计税方法)"];
  return (
    <footer className={`grid h-[22px] shrink-0 grid-cols-[557fr_559fr_454fr_348fr] gap-[2px] bg-[#fafafa] pb-px pt-[2px] ${gridFont}`}>
      {panes.map((p) => (
        <span key={p} className="truncate border border-[#d7d7d7] bg-linear-to-b from-[#fdfdfd] to-[#efefef] leading-[18px]">{p}</span>
      ))}
    </footer>
  );
}

function TaskBar() {
  return (
    <div className="flex h-2 shrink-0 items-start overflow-hidden border-t border-[#12304f] bg-linear-to-r from-[#1b5a8c] via-[#3795cf] via-30% to-[#123a6e]">
      <i className="ml-3 mt-px h-8 w-8 rounded-full border border-[#d3dde5] bg-[#6e8596]" />
      <i className="ml-7 mt-1 h-4 w-[10px] rounded-full bg-[#d6e32a]" />
      <i className="mt-1 h-4 w-[12px] rounded-full bg-[#7fd0f2]" />
      <i className="ml-10 mt-1 h-4 w-4 rounded-full bg-[#2f9bea]" />
      <span className="ml-7 flex h-8 w-[58px] justify-center rounded-sm border border-[#e3eff8] bg-[#9dc6df] pt-1"><i className="h-4 w-5 rounded-full border-2 border-[#58b04a] bg-white" /></span>
      <span className="flex h-8 w-[65px] justify-center pt-1"><i className="h-4 w-8 border border-[#d0dcea] bg-[#3160a8]" /></span>
      <span className="h-8 w-[50px] rounded-sm border border-[#e3eff8] bg-[#a9d2ea]" />
      <span className="ml-3 flex h-8 w-[59px] justify-center rounded-sm border border-white bg-[#d5e9f5] pt-1"><i className="h-4 w-8 border-2 border-[#e8961c] bg-[#fff0c8]" /></span>
      <span className="ml-auto mr-2 mt-[3px] whitespace-nowrap leading-4 text-white">20:20 周四</span>
      <i className="h-8 w-[14px] border border-[#8aa2bd] bg-[#4d6a8d]" />
    </div>
  );
}

// floating net speed ball
function SpeedBall() {
  return (
    <div className="absolute right-[52px] top-[813px] flex items-center font-['Noto_Sans',sans-serif]">
      <div className="z-10 flex h-[49px] w-[49px] items-center justify-center rounded-full border-2 border-white bg-linear-to-b from-[#0c7a4c] from-50% to-[#4ccb62] to-50% text-[14px] font-medium text-white shadow-[0_0_0_1px_#9a9a9a,0_4px_6px_rgba(0,0,0,0.4)]">
        51%
      </div>
      <div className="-ml-5 flex h-[39px] items-center rounded-r-full border border-[#b5b5b5] bg-linear-to-b from-[#f4f4f4] to-[#dadada] pl-[22px] pr-1 text-[10px] leading-[15px] text-[#1c1c1c] shadow-[0_4px_6px_rgba(0,0,0,0.35)]">
        <svg viewBox="0 0 7 24" className="mr-2 h-6 w-[7px]" fill="none" strokeWidth="1.500">
          <path d="M3.500 8V1M.5 4l3-3 3 3" stroke="#e2513a" />
          <path d="M3.500 16v7M.5 20l3 3 3-3" stroke="#2a9a50" />
        </svg>
        <div className="w-[34px] whitespace-nowrap">
          <p>0.04K/s</p>
          <p>0.07K/s</p>
        </div>
        <svg viewBox="0 0 20 20" className="ml-[2px] h-5 w-5">
          <circle cx="9" cy="11" r="8" fill="#3b7edb" stroke="#c6d6ea" />
          <path d="M9 6.500v9M4.500 11h9" stroke="#fff" strokeWidth="2" />
          <circle cx="15.500" cy="4.500" r="4" fill="#dd3a35" />
        </svg>
      </div>
    </div>
  );
}

function ImeBar() {
  return (
    <div className="absolute right-[43px] top-[948px] flex h-[30px] w-[192px] items-center gap-[5px] rounded-sm border border-[#a9bccf] bg-[#fdfdfe] pl-[5px] shadow-sm">
      <svg viewBox="0 0 32 30" className="h-[30px] w-8 shrink-0">
        <path d="M1 5L25 0l6 25-24 5z" fill="#f4501e" />
        <path d="M24 8C20 5 10 6 11 11s13 2 12 8-11 5-14 2" fill="none" stroke="#fff" strokeWidth="4" />
      </svg>
      <i className="h-[28px] w-[3px] shrink-0 border-x border-[#f7c9b5]" />
      <svg viewBox="0 0 134 16" className="h-4 w-[134px] shrink-0" fill="none" stroke="#0b63c0" strokeWidth="2">
        <path d="M1.500 4.500h12v6h-12zM7.500 1v14" />
        <circle cx="28" cy="5" r="1.800" strokeWidth="1.500" />
        <path d="M34 8.500h3.500c.5 3-1 5-3 6 1-1.500 1-2.500 0-3z" fill="#0b63c0" strokeWidth="0.500" />
        <circle cx="56" cy="8" r="7.300" strokeWidth="1.700" />
        <path d="M53.500 5v2.500M58.500 5v2.500M52 9.500c2 3.500 6 3.500 8 0" strokeWidth="1.500" />
        <path d="M74 14l1-5 7-7 4 4-7 7-5 1zM75 9l3 4" />
        <rect x="101" y="1" width="5" height="9" rx="2.500" fill="#0b63c0" strokeWidth="1" />
        <path d="M98.500 7c0 7 10 7 10 0M103.500 12v3M100 15h7" strokeWidth="1.700" />
        <path d="M121 9.500h5v5h-5zM128 9.500h5v5h-5zM121 2h5v5h-5z" fill="#0b63c0" strokeWidth="1" />
        <path d="M128.500 2.500h4v4h-4z" strokeWidth="1.500" />
      </svg>
    </div>
  );
}

export default function App() {
  return (
    <div className={`relative flex h-screen flex-col overflow-hidden bg-[#efefef] text-[12px] leading-4 text-black ${uiFont}`}>
      <TitleBar />
      <MenuBar />
      <MainToolbar />
      <div className="flex min-h-0 flex-1">
        <SideTabs />
        <TreePanel />
        <div className="flex w-2 shrink-0 items-start justify-center pt-[420px]">
          <i className="h-[100px] w-[6px] border border-[#8e8e8e] bg-[#f7f7f7]" />
        </div>
        <main className="flex min-w-0 flex-1 flex-col">
          <EditToolbar />
          <QuotaGrid />
          <DetailTabs />
          <div className="flex min-h-0 flex-1">
            <ResourceGrid />
            <FilterPanel />
          </div>
        </main>
      </div>
      <StatusBar />
      <TaskBar />

      <svg viewBox="0 0 1000 440" className="pointer-events-none absolute left-[396px] top-[543px] h-[440px] w-[1000px]" fill="#fc3a38" aria-hidden="true">
        <path d="M256 11l24-9-1 6 651 95.500v1L278 18l-1 6z" />
        <path d="M1 235l24-7-2 6 973 204v1L21 244l-1 6z" />
      </svg>
      <SpeedBall />
      <ImeBar />
    </div>
  );
}
